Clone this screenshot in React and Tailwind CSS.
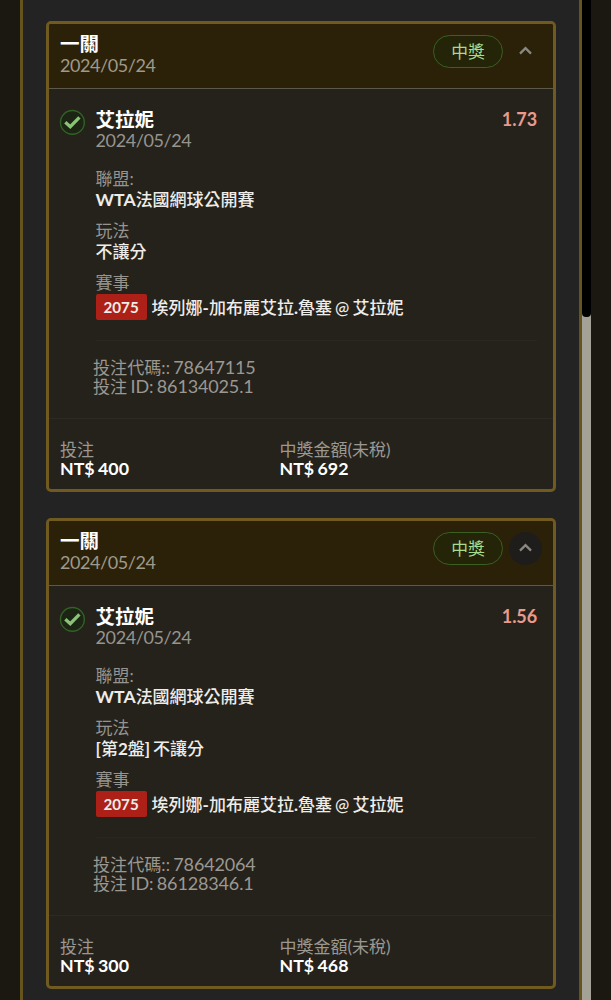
const bets = [
  {
    odds: "1.73",
    play: "不讓分",
    code: "78647115",
    id: "86134025.1",
    stake: "400",
    payout: "692",
    active: false,
  },
  {
    odds: "1.56",
    play: (
      <>
        <b>[</b>第<b>2</b>盤<b>]</b> 不讓分
      </>
    ),
    code: "78642064",
    id: "86128346.1",
    stake: "300",
    payout: "468",
    active: true,
  },
];

function CheckBadge() {
  return (
    <svg className="mt-[1px] h-[26px] w-[26px] shrink-0" viewBox="0 0 26 26" fill="none">
      <circle cx="13.4" cy="13.4" r="11.9" fill="#1c2413" stroke="#326126" strokeWidth="1.4" />
      <path d="M6.3 13.2 L11.3 17.7 L20.4 8.3" stroke="#8ac377" strokeWidth="3.3" />
    </svg>
  );
}

function Field({ label, children }) {
  return (
    <div className="mb-[10px]">
      <div className="h-[21px] leading-[21px] text-[#96948e]">{label}</div>
      <div className="h-[21px] font-medium leading-[21px] text-[#eeede9] [word-spacing:-1.5px]">{children}</div>
    </div>
  );
}

function BetCard({ bet }) {
  return (
    <section className="h-[471px] overflow-hidden rounded-[5px] border-3 border-[#705a1f] bg-[#25221c]">
      <header className="flex h-[65px] justify-between border-b border-[#5c594a] bg-[#2b2108] pl-[11px] pr-[11px]">
        <div className="pt-[9px]">
          <h2 className="h-[22px] text-[19.5px] font-bold leading-[22px] text-white">一關</h2>
          <p className="h-[21px] text-[18px] leading-[21px] tracking-[-0.42px] text-[#9f998b]">2024/05/24</p>
        </div>
        <div className="mt-[11px] flex h-[33px] gap-[6px]">
          <span className="flex h-[33px] w-[70px] items-center justify-center rounded-full border border-[#3b6023] bg-[#232408] text-[16.8px] text-[#a5dc8f]">
            中獎
          </span>
          <span
            className={
              bet.active
                ? "flex h-[33px] w-[33px] items-center justify-center rounded-full bg-[#1e1d1b]"
                : "flex h-[33px] w-[33px] items-center justify-center rounded-full"
            }
          >
            <svg className="mb-[2px] h-[9px] w-[13px]" viewBox="0 0 13 9" fill="none">
              <path d="M1 7.6 L6.5 2.2 L12 7.6" stroke="#8b8781" strokeWidth="2.3" />
            </svg>
          </span>
        </div>
      </header>

      <div className="flex gap-[10.6px] pl-[10px] pr-[16px] pt-[19px]">
        <CheckBadge />
        <div className="flex-1">
          <div className="flex justify-between">
            <div>
              <h3 className="h-[22px] text-[19.5px] font-bold leading-[24px] text-white">艾拉妮</h3>
              <p className="h-[21px] text-[18px] leading-[21px] tracking-[-0.42px] text-[#96948e]">2024/05/24</p>
            </div>
            <span className="h-[23px] text-[18px] font-bold leading-[23px] tracking-[-0.1px] text-[#e99a8c]">
              {bet.odds}
            </span>
          </div>
          <div className="h-[190px] border-b border-[#2a2722] pt-[17px] text-[17px]">
            <Field label="聯盟:">
              <span className="text-[17.6px] font-bold">WTA</span>法國網球公開賽
            </Field>
            <Field label="玩法">{bet.play}</Field>
            <div className="h-[21px] leading-[22px] text-[#96948e]">賽事</div>
            <div className="mt-px flex h-[26px] items-center gap-[5px] font-medium text-[#eeede9]">
              <span className="flex h-[26px] w-[51px] items-center justify-center rounded-[2px] bg-[#ad2017] text-[15.2px] font-bold">
                2075
              </span>
              <span className="mt-[1px] whitespace-nowrap [word-spacing:-1.2px]">
                埃列娜<b>-</b>加布麗艾拉<b>.</b>魯塞 @ 艾拉妮
              </span>
            </div>
          </div>
        </div>
      </div>

      <div className="h-[78px] border-b border-[#2d2a25] pl-[44px] pt-[17px] text-[17.1px] leading-[19px] text-[#9b9892] [word-spacing:-1px]">
        <p className="h-[19px]">
          投注代碼:: <span className="text-[18px] tracking-[-0.15px]">{bet.code}</span>
        </p>
        <p className="h-[19px]">
          投注 <span className="text-[18px] tracking-[-0.15px]">ID: {bet.id}</span>
        </p>
      </div>

      <footer className="grid grid-cols-[219.5px_1fr] pl-[11px] pt-[21px] text-[17px] leading-[19px]">
        <div>
          <p className="h-[19px] text-[#9b9892]">投注</p>
          <p className="h-[19px] text-[17.8px] font-bold text-white [word-spacing:-1px]">NT$ {bet.stake}</p>
        </div>
        <div>
          <p className="h-[19px] text-[#9b9892]">中獎金額(未稅)</p>
          <p className="h-[19px] text-[17.8px] font-bold text-white [word-spacing:-1px]">NT$ {bet.payout}</p>
        </div>
      </footer>
    </section>
  );
}

export default function App() {
  return (
    <main className="flex h-[1000px] w-[611px] overflow-hidden bg-[#1b1811] pl-[20px] font-['Lato','Noto_Sans_CJK_TC',sans-serif]">
      <div className="flex w-[562px] flex-col gap-[26px] border-x-3 border-[#65541d] bg-[#232323] pl-[23px] pr-[23px] pt-[21px]">
        {bets.map((bet) => (
          <BetCard key={bet.code} bet={bet} />
        ))}
      </div>
      <div className="w-[9px] bg-[#a4a297]">
        <div className="h-[317px] rounded-b-[4px] bg-black" />
      </div>
    </main>
  );
}
